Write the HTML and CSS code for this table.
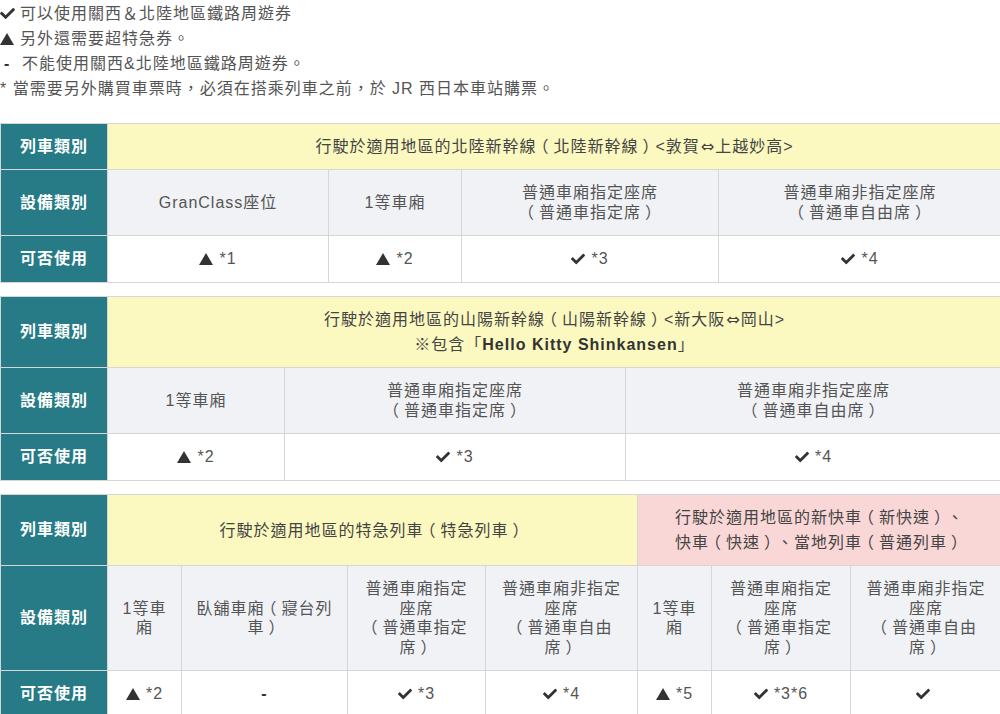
FILE: index.html
```html
<!DOCTYPE html>
<html lang="zh-Hant">
<head>
<meta charset="utf-8">
<title>關西＆北陸地區鐵路周遊券</title>
<link rel="stylesheet" href="styles.css">
</head>
<body>
<div class="legend">
  <p class="line"><svg class="ic-check lg" viewBox="0 0 512 512"><path d="M173.9 439.4l-166.4-166.4c-10-10-10-26.2 0-36.2l36.2-36.2c10-10 26.2-10 36.2 0L192 312.7 432.1 72.6c10-10 26.2-10 36.2 0l36.2 36.2c10 10 10 26.2 0 36.2l-294.4 294.4c-10 10-26.2 10-36.2 0z"/></svg><span>可以使用關西＆北陸地區鐵路周遊券</span></p>
  <p class="line"><svg class="ic-tri lg" viewBox="0 0 14 12"><path d="M7 0L14 12H0z"/></svg><span>另外還需要超特急券。</span></p>
  <p class="line"><span class="dash-lg">-</span><span>不能使用關西&amp;北陸地區鐵路周遊券。</span></p>
  <p class="line">* 當需要另外購買車票時，必須在搭乘列車之前，於 JR 西日本車站購票。</p>
</div>

<table class="tbl t1">
  <colgroup><col class="w-head"><col class="t1c1"><col class="t1c2"><col class="t1c3"><col class="t1c4"></colgroup>
  <tr>
    <th class="lab">列車類別</th>
    <td class="yel" colspan="4">行駛於適用地區的北陸新幹線<span class="fp">（</span>北陸新幹線<span class="fp">）</span>&lt;敦賀<span class="arr">⇔</span>上越妙高&gt;</td>
  </tr>
  <tr>
    <th class="lab">設備類別</th>
    <td class="gry">GranClass座位</td>
    <td class="gry">1等車廂</td>
    <td class="gry">普通車廂指定座席<br><span class="fp">（</span>普通車指定席<span class="fp">）</span></td>
    <td class="gry">普通車廂非指定座席<br><span class="fp">（</span>普通車自由席<span class="fp">）</span></td>
  </tr>
  <tr>
    <th class="lab">可否使用</th>
    <td class="wht"><svg class="ic-tri" viewBox="0 0 14 12"><path d="M7 0L14 12H0z"/></svg><span class="note">*1</span></td>
    <td class="wht"><svg class="ic-tri" viewBox="0 0 14 12"><path d="M7 0L14 12H0z"/></svg><span class="note">*2</span></td>
    <td class="wht"><svg class="ic-check" viewBox="0 0 512 512"><path d="M173.9 439.4l-166.4-166.4c-10-10-10-26.2 0-36.2l36.2-36.2c10-10 26.2-10 36.2 0L192 312.7 432.1 72.6c10-10 26.2-10 36.2 0l36.2 36.2c10 10 10 26.2 0 36.2l-294.4 294.4c-10 10-26.2 10-36.2 0z"/></svg><span class="note">*3</span></td>
    <td class="wht"><svg class="ic-check" viewBox="0 0 512 512"><path d="M173.9 439.4l-166.4-166.4c-10-10-10-26.2 0-36.2l36.2-36.2c10-10 26.2-10 36.2 0L192 312.7 432.1 72.6c10-10 26.2-10 36.2 0l36.2 36.2c10 10 10 26.2 0 36.2l-294.4 294.4c-10 10-26.2 10-36.2 0z"/></svg><span class="note">*4</span></td>
  </tr>
</table>

<table class="tbl t2">
  <colgroup><col class="w-head"><col class="t2c1"><col class="t2c2"><col class="t2c3"></colgroup>
  <tr>
    <th class="lab">列車類別</th>
    <td class="yel" colspan="3">行駛於適用地區的山陽新幹線<span class="fp">（</span>山陽新幹線<span class="fp">）</span>&lt;新大阪<span class="arr">⇔</span>岡山&gt;<br>※包含「<b class="hk">Hello Kitty Shinkansen</b>」</td>
  </tr>
  <tr>
    <th class="lab">設備類別</th>
    <td class="gry">1等車廂</td>
    <td class="gry">普通車廂指定座席<br><span class="fp">（</span>普通車指定席<span class="fp">）</span></td>
    <td class="gry">普通車廂非指定座席<br><span class="fp">（</span>普通車自由席<span class="fp">）</span></td>
  </tr>
  <tr>
    <th class="lab">可否使用</th>
    <td class="wht"><svg class="ic-tri" viewBox="0 0 14 12"><path d="M7 0L14 12H0z"/></svg><span class="note">*2</span></td>
    <td class="wht"><svg class="ic-check" viewBox="0 0 512 512"><path d="M173.9 439.4l-166.4-166.4c-10-10-10-26.2 0-36.2l36.2-36.2c10-10 26.2-10 36.2 0L192 312.7 432.1 72.6c10-10 26.2-10 36.2 0l36.2 36.2c10 10 10 26.2 0 36.2l-294.4 294.4c-10 10-26.2 10-36.2 0z"/></svg><span class="note">*3</span></td>
    <td class="wht"><svg class="ic-check" viewBox="0 0 512 512"><path d="M173.9 439.4l-166.4-166.4c-10-10-10-26.2 0-36.2l36.2-36.2c10-10 26.2-10 36.2 0L192 312.7 432.1 72.6c10-10 26.2-10 36.2 0l36.2 36.2c10 10 10 26.2 0 36.2l-294.4 294.4c-10 10-26.2 10-36.2 0z"/></svg><span class="note">*4</span></td>
  </tr>
</table>

<table class="tbl t3">
  <colgroup><col class="w-head"><col class="t3c1"><col class="t3c2"><col class="t3c3"><col class="t3c4"><col class="t3c5"><col class="t3c6"><col class="t3c7"></colgroup>
  <tr>
    <th class="lab">列車類別</th>
    <td class="yel" colspan="4">行駛於適用地區的特急列車<span class="fp">（</span>特急列車<span class="fp">）</span></td>
    <td class="pnk" colspan="3">行駛於適用地區的新快車<span class="fp">（</span>新快速<span class="fp">）</span>、<br>快車<span class="fp">（</span>快速<span class="fp">）</span>、當地列車<span class="fp">（</span>普通列車<span class="fp">）</span></td>
  </tr>
  <tr>
    <th class="lab">設備類別</th>
    <td class="gry">1等車廂</td>
    <td class="gry">臥舖車廂<span class="fp">（</span>寢台列車<span class="fp">）</span></td>
    <td class="gry">普通車廂指定座席<br><span class="fp">（</span>普通車指定席<span class="fp">）</span></td>
    <td class="gry">普通車廂非指定座席<br><span class="fp">（</span>普通車自由席<span class="fp">）</span></td>
    <td class="gry">1等車廂</td>
    <td class="gry">普通車廂指定座席<br><span class="fp">（</span>普通車指定席<span class="fp">）</span></td>
    <td class="gry">普通車廂非指定座席<br><span class="fp">（</span>普通車自由席<span class="fp">）</span></td>
  </tr>
  <tr>
    <th class="lab">可否使用</th>
    <td class="wht"><svg class="ic-tri" viewBox="0 0 14 12"><path d="M7 0L14 12H0z"/></svg><span class="note">*2</span></td>
    <td class="wht"><span class="dash">-</span></td>
    <td class="wht"><svg class="ic-check" viewBox="0 0 512 512"><path d="M173.9 439.4l-166.4-166.4c-10-10-10-26.2 0-36.2l36.2-36.2c10-10 26.2-10 36.2 0L192 312.7 432.1 72.6c10-10 26.2-10 36.2 0l36.2 36.2c10 10 10 26.2 0 36.2l-294.4 294.4c-10 10-26.2 10-36.2 0z"/></svg><span class="note">*3</span></td>
    <td class="wht"><svg class="ic-check" viewBox="0 0 512 512"><path d="M173.9 439.4l-166.4-166.4c-10-10-10-26.2 0-36.2l36.2-36.2c10-10 26.2-10 36.2 0L192 312.7 432.1 72.6c10-10 26.2-10 36.2 0l36.2 36.2c10 10 10 26.2 0 36.2l-294.4 294.4c-10 10-26.2 10-36.2 0z"/></svg><span class="note">*4</span></td>
    <td class="wht"><svg class="ic-tri" viewBox="0 0 14 12"><path d="M7 0L14 12H0z"/></svg><span class="note">*5</span></td>
    <td class="wht"><svg class="ic-check" viewBox="0 0 512 512"><path d="M173.9 439.4l-166.4-166.4c-10-10-10-26.2 0-36.2l36.2-36.2c10-10 26.2-10 36.2 0L192 312.7 432.1 72.6c10-10 26.2-10 36.2 0l36.2 36.2c10 10 10 26.2 0 36.2l-294.4 294.4c-10 10-26.2 10-36.2 0z"/></svg><span class="note">*3*6</span></td>
    <td class="wht"><svg class="ic-check" viewBox="0 0 512 512"><path d="M173.9 439.4l-166.4-166.4c-10-10-10-26.2 0-36.2l36.2-36.2c10-10 26.2-10 36.2 0L192 312.7 432.1 72.6c10-10 26.2-10 36.2 0l36.2 36.2c10 10 10 26.2 0 36.2l-294.4 294.4c-10 10-26.2 10-36.2 0z"/></svg></td>
  </tr>
</table>
</body>
</html>
```

FILE: styles.css
```css
html, body {
  margin: 0;
  padding: 0;
  overflow: hidden;
  background: #ffffff;
}
body {
  font-family: "Liberation Sans", "Noto Sans CJK TC", sans-serif;
  font-size: 16px;
  letter-spacing: 1px;
  color: #555555;
  width: 1000px;
}
.legend {
  padding-top: 1px;
  margin-bottom: 22px;
}
.line {
  margin: 0;
  line-height: 25px;
  height: 25px;
  white-space: nowrap;
}
.ic-check {
  width: 14px;
  height: 14px;
  fill: #333333;
  vertical-align: -2px;
  margin-right: 6px;
}
.ic-tri {
  width: 14px;
  height: 12px;
  fill: #333333;
  vertical-align: -1px;
  margin-right: 6px;
}
.ic-check.lg {
  width: 15px;
  height: 15px;
  margin-right: 5px;
}
.ic-tri.lg {
  margin-right: 6px;
}
.dash-lg {
  display: inline-block;
  width: 22px;
  text-indent: 4px;
  font-weight: bold;
  color: #333333;
}
.fp {
  padding: 0 4px;
  font-feature-settings: "halt";
}
.arr {
  font-family: "DejaVu Sans", sans-serif;
  font-size: 16px;
  line-height: 16px;
  letter-spacing: 0;
  padding: 0 1px;
}
.tbl {
  border-collapse: collapse;
  table-layout: fixed;
  width: 1001px;
  margin-bottom: 13px;
}
.tbl th, .tbl td {
  border: 1px solid #d6d6d6;
  text-align: center;
  vertical-align: middle;
}
.lab {
  background: #267b86;
  color: #ffffff;
  font-weight: bold;
  padding: 0 4px;
  line-height: 20px;
}
.yel {
  background: #fbf8c0;
  color: #444444;
  line-height: 25px;
  padding: 10px 12px;
}
.pnk {
  background: #f9d7d6;
  color: #444444;
  line-height: 25px;
  padding: 10px 12px;
}
.gry {
  background: #f0f2f5;
  line-height: 19.5px;
  padding: 13px 12px;
}
.wht {
  background: #ffffff;
  line-height: 20px;
  padding: 13px 12px;
  white-space: nowrap;
}
.hk {
  color: #333333;
}
.note {
  color: #555555;
}
.dash {
  font-weight: bold;
  color: #333333;
}
.w-head { width: 107px; }
.t1c1 { width: 221px; }
.t1c2 { width: 133px; }
.t1c3 { width: 257px; }
.t1c4 { width: 283px; }
.t2c1 { width: 177px; }
.t2c2 { width: 341px; }
.t2c3 { width: 376px; }
.t3c1 { width: 74px; }
.t3c2 { width: 166px; }
.t3c3 { width: 138px; }
.t3c4 { width: 152px; }
.t3c5 { width: 74px; }
.t3c6 { width: 139px; }
.t3c7 { width: 151px; }
```
